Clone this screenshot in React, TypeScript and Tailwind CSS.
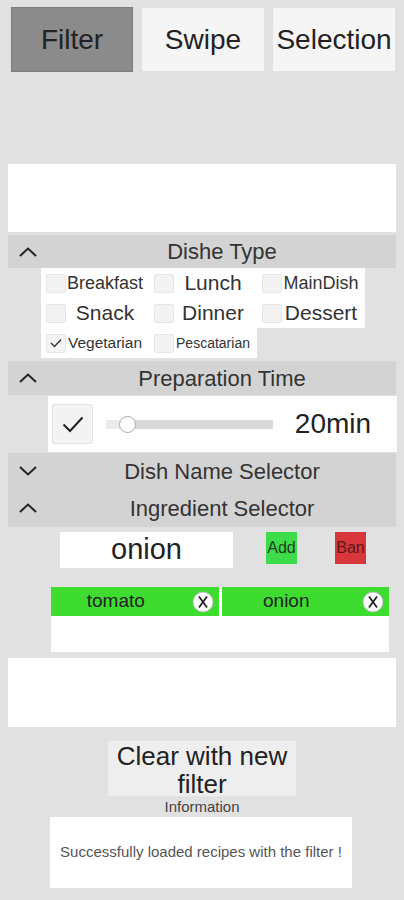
import React from 'react';

const Chevron = ({ up }: { up: boolean }) => (
  <svg width="18" height="10" viewBox="0 0 18 10" className="shrink-0">
    <polyline
      points={up ? '1,9 9,1.5 17,9' : '1,1 9,8.5 17,1'}
      fill="none"
      stroke="#222"
      strokeWidth="2"
    />
  </svg>
);

const Header = ({ title, up, h }: { title: string; up: boolean; h: string }) => (
  <div className={`flex items-center ${h}`}>
    <div className="w-[40px] pl-[11px] flex items-center">
      <Chevron up={up} />
    </div>
    <div className="flex-1 text-center text-[22px] text-[#333]">{title}</div>
  </div>
);

const Box = ({ checked }: { checked?: boolean }) => (
  <div className="w-[20px] h-[19px] shrink-0 bg-[#f3f3f3] border border-[#e6e6e6] rounded-[2px] flex items-center justify-center">
    {checked && (
      <svg width="12" height="10" viewBox="0 0 12 10">
        <polyline points="1,5 4.5,8.5 11,1.5" fill="none" stroke="#333" strokeWidth="1.4" />
      </svg>
    )}
  </div>
);

const Cell = ({ label, size, checked }: { label: string; size: string; checked?: boolean }) => (
  <div className="w-[108px] h-[30px] flex items-center pl-[5px] pr-[5px]">
    <Box checked={checked} />
    <div className={`flex-1 text-center whitespace-nowrap text-[#333] ${size}`}>{label}</div>
  </div>
);

const CloseDot = () => (
  <svg width="22" height="22" viewBox="0 0 22 22" className="shrink-0">
    <circle cx="11" cy="11" r="10" fill="#fff" stroke="#bbb" strokeWidth="1" />
    <line x1="7" y1="5.5" x2="15" y2="16.5" stroke="#222" strokeWidth="1.8" />
    <line x1="15" y1="5.5" x2="7" y2="16.5" stroke="#222" strokeWidth="1.8" />
  </svg>
);

const Tag = ({ label }: { label: string }) => (
  <div className="flex-1 h-[29px] bg-[#3fdc30] flex items-center">
    <div className="flex-1 text-center text-[19px] text-[#222] pl-[2px]">{label}</div>
    <div className="w-[40px] flex items-center justify-center pl-[8px]">
      <CloseDot />
    </div>
  </div>
);

export default function App() {
  return (
    <div className="w-[404px] h-[900px] bg-[#e1e1e1] overflow-hidden flex flex-col font-['Liberation_Sans',Arial,sans-serif]">
      {/* tabs */}
      <div className="flex items-center gap-[9px] pl-[11px] mt-[7px] h-[65px]">
        <div className="w-[122px] h-[65px] bg-[#8b8b8b] border border-[#7d7d7d] flex items-center justify-center text-[28px] text-[#222]">
          Filter
        </div>
        <div className="w-[122px] h-[63px] bg-[#f5f5f5] flex items-center justify-center text-[28px] text-[#222]">
          Swipe
        </div>
        <div className="w-[122px] h-[63px] bg-[#f5f5f5] flex items-center justify-center text-[28px] text-[#222]">
          Selection
        </div>
      </div>

      <div className="mx-[8px] mt-[92px] h-[68px] bg-white" />

      {/* dish type */}
      <div className="mx-[8px] mt-[3px] bg-[#d3d3d3]">
        <Header title="Dishe Type" up h="h-[33px]" />
      </div>
      <div className="ml-[41px] w-[324px] bg-white flex flex-wrap">
        <Cell label="Breakfast" size="text-[18px]" />
        <Cell label="Lunch" size="text-[21px]" />
        <Cell label="MainDish" size="text-[18px]" />
        <Cell label="Snack" size="text-[21px]" />
        <Cell label="Dinner" size="text-[21px]" />
        <Cell label="Dessert" size="text-[21px]" />
      </div>
      <div className="ml-[41px] w-[216px] bg-white flex">
        <Cell label="Vegetarian" size="text-[15.5px]" checked />
        <Cell label="Pescatarian" size="text-[14px]" />
      </div>

      {/* preparation time */}
      <div className="mx-[8px] mt-[3px] bg-[#d3d3d3]">
        <Header title="Preparation Time" up h="h-[34px]" />
      </div>
      <div className="ml-[48px] mr-[7px] mt-[1px] h-[56px] bg-white flex items-center pl-[4px]">
        <div className="w-[41px] h-[40px] bg-[#f3f3f3] border border-[#e4e4e4] rounded-[2px] flex items-center justify-center">
          <svg width="22" height="17" viewBox="0 0 22 17">
            <polyline points="1.5,8.5 8,15 20.5,1.5" fill="none" stroke="#222" strokeWidth="2" />
          </svg>
        </div>
        <div className="ml-[13px] w-[167px] h-[9px] bg-[#d9d9d9] flex items-center relative">
          <div className="w-[20px] h-[9px] bg-[#ebebeb]" />
          <div className="absolute left-[13px] w-[17px] h-[17px] rounded-full bg-white border border-[#aaa]" />
        </div>
        <div className="flex-1 text-center text-[28px] text-[#222] pr-[4px]">20min</div>
      </div>

      {/* selectors */}
      <div className="mx-[8px] mt-[1px] bg-[#d3d3d3]">
        <Header title="Dish Name Selector" up={false} h="h-[36px]" />
        <Header title="Ingredient Selector" up h="h-[38px]" />
      </div>
      <div className="flex items-start mt-[5px] h-[36px]">
        <div className="ml-[60px] w-[173px] h-[36px] bg-white flex items-center justify-center text-[29px] text-[#222]">
          onion
        </div>
        <div className="ml-[33px] w-[31px] h-[32px] bg-[#3ddc4a] flex items-center justify-center text-[16px] text-[#1f3a1f]">
          Add
        </div>
        <div className="ml-[38px] w-[31px] h-[32px] bg-[#d9363b] flex items-center justify-center text-[16px] text-[#5a1a1a]">
          Ban
        </div>
      </div>
      <div className="ml-[51px] w-[338px] mt-[19px] h-[65px] bg-white">
        <div className="flex gap-[3px]">
          <Tag label="tomato" />
          <Tag label="onion" />
        </div>
      </div>

      <div className="mx-[8px] mt-[6px] h-[69px] bg-white" />

      {/* bottom */}
      <div className="ml-[107px] mt-[13px] w-[190px] h-[57px] bg-[#eeeeee] border border-[#e4e4e4] flex flex-col items-center justify-start text-[26px] leading-[28px] text-[#222] pt-[1px]">
        <span>Clear with new</span>
        <span>filter</span>
      </div>
      <div className="h-[20px] flex items-center justify-center text-[15px] text-[#444]">Information</div>
      <div className="ml-[50px] w-[302px] h-[71px] bg-white flex items-center justify-center text-[15px] text-[#555]">
        Successfully loaded recipes with the filter !
      </div>
    </div>
  );
}
